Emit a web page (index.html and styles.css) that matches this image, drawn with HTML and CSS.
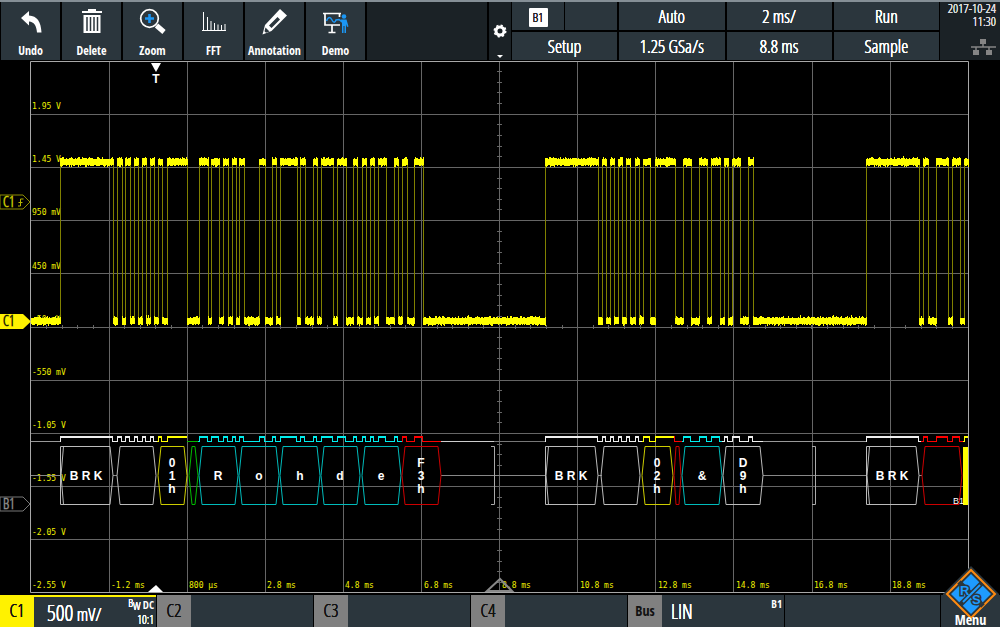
FILE: index.html
```html
<!DOCTYPE html>
<html lang="en">
<head>
  <meta charset="UTF-8">
  <meta name="viewport" content="width=device-width, initial-scale=1.0">
  <title>Oscilloscope - LIN decode</title>
  <link rel="stylesheet" href="styles.css">
</head>
<body>
  <header class="topbar">
    <nav class="tools">
      <button class="tool">
        <svg width="28" height="28" viewBox="0 0 28 28"><path d="M4 10 12 3v4.500c8 .5 12 6 12.500 17h-4.500c-.5-7-3-10.500-8-11v4z" fill="#fff"/></svg>
        <span>Undo</span>
      </button>
      <button class="tool">
        <svg width="28" height="28" viewBox="0 0 28 28"><path d="M10 3V1h8v2h6v2H4V3zM5.500 7h17v18h-17z" fill="#fff"/><path d="M9 9v14M12.500 9v14M16 9v14M19.500 9v14" stroke="#2b363d" stroke-width="1.500"/></svg>
        <span>Delete</span>
      </button>
      <button class="tool">
        <svg width="28" height="28" viewBox="0 0 28 28"><circle cx="10.500" cy="10.500" r="8.800" fill="none" stroke="#fff" stroke-width="1.700"/><path d="m17.500 17.500 7.500 6.500" stroke="#fff" stroke-width="5"/><path d="M10.500 6v9M6 10.500h9" stroke="#1b97f5" stroke-width="2.600"/></svg>
        <span>Zoom</span>
      </button>
      <button class="tool">
        <svg width="28" height="28" viewBox="0 0 28 28"><path d="M2 22.500h24M3.500 4v18M7.500 9v13M11 13v9M14.500 15v7M18 16.500V22M21.500 17v5M25 16v6" stroke="#fff" fill="none"/></svg>
        <span>FFT</span>
      </button>
      <button class="tool">
        <svg width="28" height="28" viewBox="0 0 28 28"><path d="m19 1 7 6.500L10.500 23 1.500 26.500 4 17z" fill="#fff"/><path d="m16.500 9 2.500 2.500-8.500 8.500-2.500-2.500zM4.500 19.500l4 4-3.500 1.300-1.500-1.500z" fill="#2b363d"/></svg>
        <span>Annotation</span>
      </button>
      <button class="tool">
        <svg width="28" height="28" viewBox="0 0 28 28"><path d="M1 5.500h18M3 6v11h15M17.500 6v3M10 17v7M6.500 24.500h7" stroke="#fff" stroke-width="1.700" fill="none"/><path d="M4.500 13c2-5 4-4 5.500-1s3 3 4 0l3-.5 3 2.500" stroke="#1b97f5" stroke-width="1.500" fill="none"/><circle cx="22" cy="8.500" r="2.300" fill="#1b97f5"/><path d="M18.500 11.500h6l2 7-1.500.5-1-3v9h-1.500v-7h-1v7H20v-10z" fill="#1b97f5"/></svg>
        <span>Demo</span>
      </button>
      <div class="spare"></div>
      <button class="tool-settings" aria-label="Toolbar settings">
        <svg width="16" height="38" viewBox="0 0 16 38"><circle cx="8" cy="9" r="4" fill="none" stroke="#fff" stroke-width="3"/><circle cx="8" cy="9" r="5.700" fill="none" stroke="#fff" stroke-width="1.600" stroke-dasharray="2.200 2.270"/><path d="M5 33h6l-3 3z" fill="#fff"/></svg>
      </button>
    </nav>
    <div class="readouts">
      <div class="trigger-cell">
        <button class="cell"><span class="badge">B1</span></button>
        <button class="cell" aria-label="Trigger slope"></button>
      </div>
      <button class="cell">Auto</button>
      <button class="cell">2 ms/</button>
      <button class="cell">Run</button>
      <button class="cell">Setup</button>
      <button class="cell">1.25 GSa/s</button>
      <button class="cell">8.8 ms</button>
      <button class="cell">Sample</button>
    </div>
    <div class="status">
      <time>2017-10-24<br>11:30</time>
      <svg width="26" height="18" viewBox="0 0 26 18"><path d="M10 1h6v5h-6zM3 12h6v5H3zM16 12h6v5h-6z" fill="#858585"/><path d="M1 9h25M13 5v4M6 9v4M19 9v4" stroke="#858585" stroke-width="1.500"/></svg>
    </div>
  </header>

  <main>
    <svg class="scope" viewBox="0 61 1000 534">
      <g id="labels" class="labels"></g>
      <g id="grid" class="grid"></g>
      <g id="trace"></g>
      <g id="bus"></g>

      <path d="M151 63h10l-5 9z" fill="#fff"/>
      <text x="156" y="83" class="trigger-mark">T</text>
      <path d="M148 592h15l-7-7z" fill="#fff"/>
      <path d="M487 591h25l-12-12z" fill="none" stroke="#888" stroke-width="2"/>

      <path d="M0 195h23l7 7-7 7H0z" fill="#000" stroke="#8c8c00"/>
      <text x="3" y="207" class="marker yellow">C1</text>
      <path d="M18 206h2.500v-7h3M18.500 202.500h4" fill="none" stroke="#b5b500"/>
      <path d="M0 314h23l8 7.500-8 7.500H0z" fill="#fff200"/>
      <text x="3" y="326" class="marker">C1</text>
      <path d="M0 497h23l7 7-7 7H0z" fill="#000" stroke="#777"/>
      <text x="3" y="509" class="marker grey">B1</text>
    </svg>
  </main>

  <footer class="channels">
    <button class="channel active">
      <span class="tag">C1</span>
      <span class="info"><span class="scale"><b>500</b> mV/</span><span class="coupling"><span><sup>B</sup><sub>W</sub> <strong>DC</strong></span><span>10:1</span></span></span>
    </button>
    <button class="channel"><span class="tag">C2</span><span class="info"></span></button>
    <button class="channel"><span class="tag">C3</span><span class="info"></span></button>
    <button class="channel"><span class="tag">C4</span><span class="info"></span></button>
    <button class="channel bus"><span class="tag">Bus</span><span class="info"><span>LIN</span><strong>B1</strong></span></button>
    <div class="blank"></div>
    <button class="menu">
      <svg class="logo" width="60" height="60" viewBox="0 0 60 60">
        <path d="M30 2 58 30v30H2V30z" fill="#2b363d"/>
        <path d="M30 6 54 30 30 54 6 30z" fill="#2b363d" stroke="#ff8a10" stroke-width="2"/>
        <path d="M30 10 50 30 30 50 10 30z" fill="#1e9bff"/>
        <path d="m18 18 24 24M19 41l22-22" stroke="#2b363d" stroke-width="5"/>
        <text x="19" y="31">R</text>
        <text x="31" y="40">S</text>
        <path d="m22 38 17-17" stroke="#1e9bff" stroke-width="2"/>
      </svg>
      <span>Menu</span>
    </button>
  </footer>

  <script src="scope.js"></script>
</body>
</html>
```
FILE: styles.css
```css
* {
  box-sizing: border-box;
}
body {
  margin: 0;
  background-color: #000;
  color: #fff;
  font-family: "Open Sans Condensed Light", "Open Sans Condensed", "Roboto Condensed", "Liberation Sans", sans-serif;
  font-weight: 300;
}
button {
  margin: 0;
  padding: 0;
  border: none;
  background-color: #2b363d;
  color: #fff;
  font: inherit;
}
svg {
  display: block;
}

/* top bar */
.topbar {
  display: grid;
  grid-template-columns: 511fr 427fr 60fr;
  gap: 1px;
  height: 61px;
  padding-bottom: 1px;
  border-top: 2px solid #858f96;
}
.tools {
  display: grid;
  grid-template-columns: repeat(6, 59fr) 120fr 22fr;
  gap: 2px;
  padding-left: 1px;
}
.tool {
  display: flex;
  flex-direction: column;
  align-items: center;
  justify-content: space-between;
  padding: 6px 0 1px;
  font-family: "Open Sans Condensed", "Liberation Sans", sans-serif;
  font-size: 12px;
  font-weight: bold;
  line-height: 16px;
}
.spare,
.tool-settings,
.status {
  background-color: #1b2226;
}
.tool-settings {
  display: flex;
  align-items: flex-end;
  justify-content: center;
}
.readouts {
  display: grid;
  grid-template-columns: repeat(4, 1fr);
  grid-template-rows: 1fr 1fr;
  gap: 2px;
}
.trigger-cell {
  display: grid;
  grid-template-columns: 1fr 1fr;
  gap: 1px;
}
.cell {
  font-size: 18px;
  line-height: 20px;
}
/* the light face is too thin on a dark panel, so draw it heavier */
.cell,
.status,
.tag,
.info {
  text-shadow: 0 0 currentColor, 0 0 currentColor, 0 0 currentColor;
}
.badge {
  display: inline-block;
  width: 19px;
  background-color: #fff;
  color: #222;
  border-radius: 1px;
  font-size: 13px;
  line-height: 19px;
}
.status {
  display: flex;
  flex-direction: column;
  align-items: flex-end;
  justify-content: space-between;
  padding: 0 4px 4px 0;
  color: #ddd;
  font-size: 13px;
  line-height: 13px;
  text-align: right;
}

/* diagram */
.scope {
  width: 100%;
}
.grid {
  fill: none;
  stroke: #666;
}
.grid .frame {
  stroke: #a8a8a8;
}
.labels {
  fill: #f0f000;
  font-family: "DejaVu Sans Mono", monospace;
  font-size: 8px;
}
.noise {
  fill: #ffff00;
}
.edges {
  fill: none;
  stroke: #808000;
}
.bus-frame {
  fill: none;
}
.bus-text {
  fill: #fff;
  font-family: "Liberation Sans", sans-serif;
  font-size: 12px;
  font-weight: bold;
  text-anchor: middle;
}
.bus-name {
  fill: #fff;
  font-family: "Liberation Sans", sans-serif;
  font-size: 9px;
}
.trigger-mark {
  fill: #fff;
  font-family: "Liberation Sans", sans-serif;
  font-size: 12px;
  font-weight: bold;
  text-anchor: middle;
}
.marker {
  stroke: #000;
  stroke-opacity: 0.5;
  font-size: 14px;
}
.yellow {
  fill: #e0e000;
  stroke: #e0e000;
}
.grey {
  fill: #999;
  stroke: #999;
}

/* bottom bar */
.channels {
  display: grid;
  grid-template-columns: repeat(5, 156fr) 155fr 59fr;
  gap: 1px;
  height: 32px;
}
.channel {
  display: grid;
  grid-template-columns: 34px 1fr;
  text-align: left;
}
.tag {
  display: flex;
  align-items: center;
  justify-content: center;
  padding-bottom: 2px;
  background-color: #808080;
  color: #111;
  font-size: 18px;
}
.info {
  display: flex;
  align-items: center;
  justify-content: space-between;
  padding: 0 2px 0 13px;
}
.active .info {
  border-top: 2px solid #fff200;
}
.active .tag {
  background-color: #fff200;
}
.scale {
  font-size: 18px;
}
.scale b {
  font-size: 22px;
  font-weight: inherit;
}
.coupling {
  display: flex;
  flex-direction: column;
  font-size: 12px;
  line-height: 15px;
  text-align: right;
}
.coupling sup,
.coupling sub {
  font-size: 11px;
  line-height: 0;
}
.coupling sup {
  vertical-align: 2px;
}
.coupling sub {
  vertical-align: -1px;
}
.channel strong {
  font-family: "Open Sans Condensed", "Liberation Sans", sans-serif;
  font-size: 11px;
  text-shadow: none;
}
.bus .tag {
  font-family: "Open Sans Condensed", "Liberation Sans", sans-serif;
  font-size: 14px;
  font-weight: bold;
  text-shadow: none;
}
.bus .info {
  padding-left: 9px;
  font-size: 20px;
}
.bus strong {
  align-self: flex-start;
  line-height: 18px;
}
.blank {
  background-color: #2b363d;
}
.menu {
  position: relative;
  display: flex;
  align-items: flex-end;
  justify-content: center;
  font-family: "Open Sans Condensed", "Liberation Sans", sans-serif;
  font-size: 14px;
  font-weight: bold;
  line-height: 14px;
}
.logo {
  position: absolute;
  left: 0;
  bottom: 3px;
}
.logo text {
  fill: #1e9bff;
  stroke: #2b363d;
  stroke-width: 3px;
  paint-order: stroke;
  font-family: "Liberation Sans", sans-serif;
  font-size: 13px;
  font-weight: bold;
}
.menu span {
  position: relative;
}
```
FILE: scope.js
```js
const LEFT = 31, RIGHT = 968, TOP = 61, BOTTOM = 593;
const DIV_X = 78.1, DIV_Y = 53.2;

// intervals in which the LIN line is high
const highs = [
  [60, 113], [117, 122], [125, 130], [134, 138], [142, 146], [150, 154], [158, 162], [167, 187],
  [199, 208], [211, 219], [223, 228], [232, 236], [239, 244], [259, 265], [272, 276], [280, 297],
  [300, 305], [313, 317], [321, 333], [337, 346], [353, 357], [362, 366], [370, 374], [378, 386],
  [394, 398], [402, 407], [414, 423],
  [545, 598], [602, 606], [610, 614], [618, 622], [626, 630], [635, 639], [643, 650], [655, 675],
  [683, 691], [699, 707], [711, 720], [724, 728], [732, 740], [748, 753],
  [866, 919], [923, 928], [936, 948], [952, 960], [964, 968]
];

// colour of the bit line, by start position
const colours = [
  [31, '#999'], [60, '#eee'], [157, '#ff0'], [187, '#0b0'], [198, '#0ee'], [402, '#f00'], [441, '#ccc'], [494, '#777'],
  [545, '#eee'], [642, '#ff0'], [674, '#f00'], [682, '#0ee'], [722, '#eee'], [763, '#999'],
  [866, '#eee'], [921, '#f00'], [963, '#ff0'], [968, '']
];

// [left, right, slant, colour, text]
const frames = [
  [117, 156, 3, '#bbb', ''], [158, 187, 3, '#cc0', '01h'], [189, 198, 3, '#0b0', ''],
  [199, 238, 3, '#0bb', 'R'], [239, 279, 3, '#0bb', 'o'], [280, 320, 3, '#0bb', 'h'],
  [321, 360, 3, '#0bb', 'd'], [362, 401, 3, '#0bb', 'e'], [402, 441, 3, '#c00', 'F3h'],
  [601, 640, 3, '#bbb', ''], [642, 673, 3, '#cc0', '02h'], [674, 681, 2, '#c00', ''],
  [682, 722, 3, '#0bb', '&amp;'], [723, 763, 3, '#bbb', 'D9h'],
  [922, 962, 3, '#c00', '']
];
const breaks = [[60, 113], [545, 598], [866, 919]];

let seed = 7;
function rnd() {
  seed = (seed * 16807) % 2147483647;
  return seed / 2147483647;
}

function noise(from, to, y) {
  let d = '';
  for (let x = from; x < to; x++) {
    const up = 3 + Math.floor(rnd() * 2.300) + (rnd() > 0.930 ? 1 : 0);
    const down = 3 + Math.floor(rnd() * 2.200);
    d += `M${x} ${y - up}h1v${up + down}h-1z`;
  }
  return d;
}

// graticule
let grid = '';
for (let i = 1; i < 12; i++) {
  const x = Math.floor(LEFT + i * DIV_X) + 0.5;
  grid += `M${x} ${TOP}V${BOTTOM}`;
}
for (let i = 1; i < 10; i++) {
  const y = Math.floor(TOP + i * DIV_Y) + 0.5;
  grid += `M${LEFT} ${y}H${RIGHT}`;
}
for (let i = 1; i < 60; i++) grid += `M${Math.floor(LEFT + i * DIV_X / 5) + 0.5} 325v4`;
for (let i = 1; i < 50; i++) grid += `M497 ${Math.floor(TOP + i * DIV_Y / 5) + 0.5}h5`;
document.getElementById('grid').innerHTML =
  `<path d="${grid}"/><path class="frame" d="M30.5 61.5H968.5V592.5H30.5z"/>`;

// axis labels
const volts = ['1.95 V', '1.45 V', '950 mV', '450 mV', '-50 mV', '-550 mV', '-1.05 V', '-1.55 V', '-2.05 V', '-2.55 V'];
const times = ['-1.2 ms', '800 µs', '2.8 ms', '4.8 ms', '6.8 ms', '8.8 ms', '10.8 ms', '12.8 ms', '14.8 ms', '16.8 ms', '18.8 ms'];
document.getElementById('labels').innerHTML =
  volts.map((t, i) => `<text x="32" y="${Math.round(109 + i * DIV_Y)}">${t}</text>`).join('') +
  times.map((t, i) => `<text x="${Math.round(LEFT + 2 + (i + 1) * DIV_X)}" y="588">${t}</text>`).join('');

// waveform
let edges = '', body = '', last = LEFT;
for (const [a, b] of highs) {
  body += noise(last, a + 1, 321) + noise(a, b + 1, 162);
  edges += `M${a + 0.5} 162V321`;
  if (b < RIGHT) edges += `M${b + 0.5} 162V321`;
  last = b;
}
document.getElementById('trace').innerHTML =
  `<path class="edges" d="${edges}"/><path class="noise" d="${body}"/>`;

// decoded bus
let bus = '';
for (let i = 0; i < colours.length - 1; i++) {
  const [from, colour] = colours[i];
  const to = colours[i + 1][0];
  let thick = '', thin = '', x = from;
  for (const [a, b] of highs) {
    if (b <= from || a >= to) continue;
    const s = Math.max(a, from), e = Math.min(b, to);
    if (s > x) thin += `M${x} 441.5H${s}`;
    thick += `M${s} 437H${e}`;
    if (a >= from) thin += `M${a + 0.5} 436V442`;
    if (b < to) thin += `M${b - 0.5} 436V442`;
    x = e;
  }
  if (x < to) thin += `M${x} 441.5H${to}`;
  bus += `<path d="${thick}" stroke="${colour}" stroke-width="2"/><path d="${thin}" stroke="${colour}"/>`;
}
bus += '<path d="M31 475.5H60M441 475.5H545M763 475.5H866M113 475.5h4M598 475.5h4M919 475.5h3" stroke="#888"/>';
bus += '<path d="M491 446.5h3.500v58H491M812 446.5h3.500v58H812" stroke="#aaa"/>';
for (const [l, r] of breaks) {
  bus += `<path d="M${l + 0.5} 446.5H${r - 3}L${r} 475.5L${r - 3} 504.5H${l + 0.5}zM${l + 3.5} 446.5L${l + 1} 475.5L${l + 3.5} 504.5" stroke="#bbb"/>`;
  bus += `<text class="bus-text" x="${l + 26}" y="480">B R K</text>`;
}
for (const [l, r, s, colour, text] of frames) {
  bus += `<path d="M${l} 475.5L${l + s} 446.5H${r - s}L${r} 475.5L${r - s} 504.5H${l + s}z" stroke="${colour}"/>`;
  const x = Math.floor((l + r) / 2);
  if (/^..h$/.test(text)) {
    [...text].forEach((c, i) => bus += `<text class="bus-text" x="${x}" y="${467 + i * 13}">${c}</text>`);
  } else if (text) {
    bus += `<text class="bus-text" x="${x}" y="480">${text}</text>`;
  }
}
bus += '<path d="M963 447h5v58h-5z" fill="#ff0"/><text class="bus-name" x="953" y="504">B1</text>';
document.getElementById('bus').innerHTML = `<g class="bus-frame">${bus}</g>`;
```
